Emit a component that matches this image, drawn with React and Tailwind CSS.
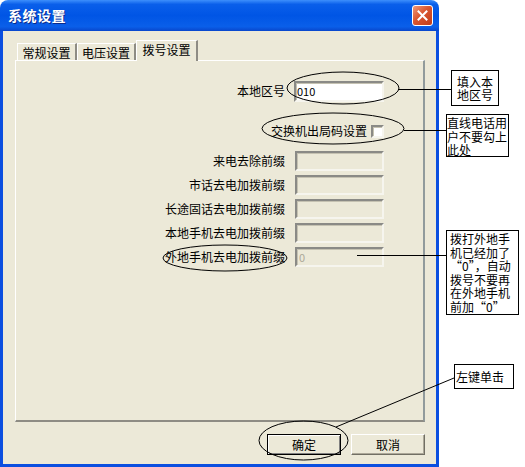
import React from "react";

const fields = [
  { label: "来电去除前缀", value: "" },
  { label: "市话去电加拨前缀", value: "" },
  { label: "长途固话去电加拨前缀", value: "" },
  { label: "本地手机去电加拨前缀", value: "" },
  { label: "外地手机去电加拨前缀", value: "0" },
];

const sunken =
  "border-2 border-t-[#8a8a86] border-l-[#8a8a86] border-b-[#f6f5ee] border-r-[#f6f5ee] shadow-[inset_1px_1px_0_#c5c2b2]";

const Tab = ({ label, active, width }) =>
  active ? (
    <div
      className={`relative z-10 h-[21px] ${width} -mb-px flex items-center justify-center bg-[#ECE9D8] border-t border-l border-white border-r-2 border-r-[#8e8c84] pb-[2px]`}>
      {label}
    </div>
  ) : (
    <div
      className={`h-[17px] ${width} flex items-center justify-center bg-[#ECE9D8] border-t border-l border-white border-r-2 border-r-[#8e8c84] pt-[1px]`}>
      {label}
    </div>
  );

const Note = ({ className, children }) => (
  <div
    className={`absolute bg-white border border-black text-[12px] leading-[13.5px] whitespace-nowrap ${className}`}>
    {children}
  </div>
);

export default function App() {
  return (
    <div className="relative w-[525px] h-[467px] bg-white overflow-hidden text-[12px] text-black font-['Noto_Sans_CJK_SC','Noto_Sans',sans-serif]">
      <div className="w-[439px] h-[467px] flex flex-col">
        {/* title bar */}
        <div className="h-[31px] rounded-t-[8px] flex items-center justify-between pl-[8px] pr-[6px] bg-[linear-gradient(180deg,#3d8ffc_0%,#0a5fea_14%,#0055e5_50%,#0a5fe9_86%,#0846cc_100%)]">
          <span className="text-white font-bold text-[14px] tracking-[0.5px] [text-shadow:1px_1px_0_#0a2a8a]">
            系统设置
          </span>
          <div className="w-[21px] h-[21px] rounded-[3px] border border-white flex items-center justify-center bg-[linear-gradient(135deg,#f09a7a_0%,#d9552f_45%,#c23c18_100%)]">
            <svg width="11" height="11" viewBox="0 0 11 11">
              <path d="M1.5 1.5 L9.5 9.5 M9.5 1.5 L1.5 9.5" stroke="white" strokeWidth="2" strokeLinecap="square" />
            </svg>
          </div>
        </div>

        {/* body */}
        <div className="flex-1 bg-[#ECE9D8] border-x-[3px] border-b-[3px] border-[#0b4fe0] pl-[12px] pr-[11px] pt-[9px] flex flex-col">
          <div className="flex items-end pl-[2px] h-[20px]">
            <Tab label="常规设置" width="w-[60px]" />
            <Tab label="电压设置" width="w-[59px]" />
            <Tab label="拨号设置" width="w-[62px]" active />
          </div>

          <div className="w-[410px] h-[362px] border border-l-white border-t-white border-r-[#919b9c] border-b-2 border-b-[#8e8c84] border-r-2">
            <div className="flex flex-col pr-[39px] pt-[20px]">
              <div className="flex items-center justify-end h-[20px]">
                <span className="mr-[9px]">本地区号</span>
                <div className={`w-[90px] h-[21px] bg-white ${sunken} flex items-center pl-[1px] text-[11px]`}>
                  010
                </div>
              </div>

              <div className="flex items-center justify-end h-[20px] mt-[20px]">
                <span className="mr-[4px]">交换机出局码设置</span>
                <div className={`w-[13px] h-[13px] bg-white ${sunken}`} />
              </div>

              <div className="flex flex-col gap-[4px] mt-[10px]">
                {fields.map((f) => (
                  <div key={f.label} className="flex items-center justify-end h-[20px]">
                    <span className="mr-[10px]">{f.label}</span>
                    <div
                      className={`w-[89px] h-[20px] bg-[#ECE9D8] ${sunken} flex items-center pl-[2px] text-[11px] text-[#aca899]`}>
                      {f.value}
                    </div>
                  </div>
                ))}
              </div>
            </div>
          </div>

          <div className="flex justify-end gap-[10px] mt-[12px]">
            <button className="w-[74px] h-[21px] bg-[#ECE9D8] border border-black shadow-[inset_1px_1px_0_#fff,inset_-1px_-1px_0_#808080] flex items-center justify-center">
              确定
            </button>
            <button className="w-[74px] h-[21px] bg-[#ECE9D8] border border-t-white border-l-white border-b-[#716f64] border-r-[#716f64] shadow-[inset_-1px_-1px_0_#aca899] flex items-center justify-center">
              取消
            </button>
          </div>
        </div>
      </div>

      {/* annotations */}
      <svg className="absolute inset-0 pointer-events-none" width="525" height="467">
        <g fill="none" stroke="black" strokeWidth="1">
          <ellipse cx="343" cy="88" rx="56" ry="16" />
          <ellipse cx="333" cy="128.5" rx="71" ry="15.5" />
          <ellipse cx="225" cy="258" rx="62" ry="13" />
          <ellipse cx="303.5" cy="440.5" rx="44.5" ry="19.5" />
          <path d="M399 89.5 H451" />
          <path d="M404 130.5 H446" />
          <path d="M357 255.5 H446" />
          <path d="M336 427 L454 378" />
        </g>
      </svg>

      <Note className="left-[451px] top-[70px] w-[48px] h-[36px] flex flex-col items-center justify-center">
        <span>填入本</span>
        <span>地区号</span>
      </Note>
      <Note className="left-[446px] top-[114px] w-[63px] h-[43px] pt-[1px]">
        直线电话用
        <br />
        户不要勾上
        <br />
        此处
      </Note>
      <Note className="left-[446px] top-[230px] w-[73px] h-[85px] pl-[3px] pt-[1px]">
        拨打外地手
        <br />
        机已经加了
        <br />
        “0”，自动
        <br />
        拨号不要再
        <br />
        在外地手机
        <br />
        前加“0”
      </Note>
      <Note className="left-[454px] top-[364px] w-[60px] h-[25px] pl-[1px] flex items-center">
        左键单击
      </Note>
    </div>
  );
}
